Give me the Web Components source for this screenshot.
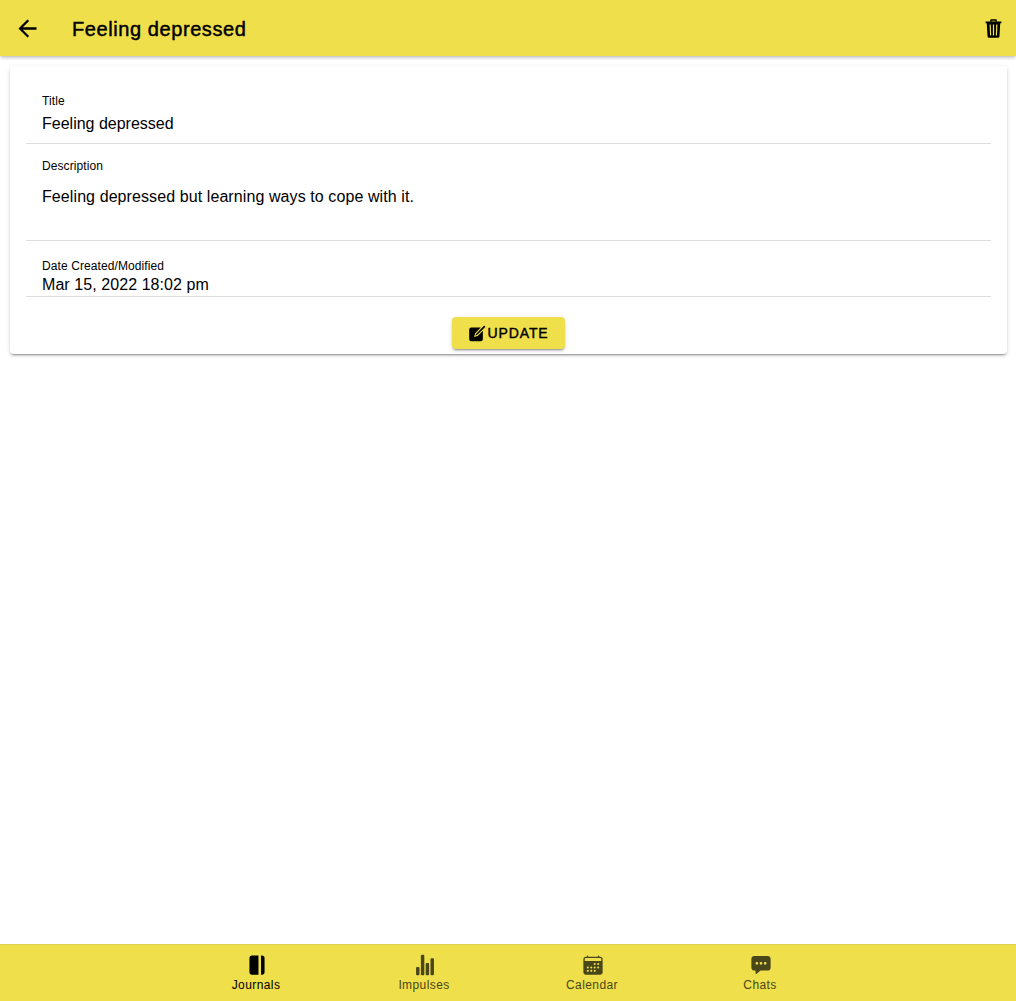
<!DOCTYPE html>
<html lang="en"><head><meta charset="utf-8"><title>Journal</title>
<style>html,body{margin:0;height:100%;background:#fff}body{font-family:"Liberation Sans",Arial,sans-serif;color:#000;overflow:hidden}</style></head>
<body><journal-page></journal-page>
<script>
const ICONS={
back:'<path d="M427 234.6H167l119.7-119.7L256 85.3 85.3 256 256 426.7l29.9-29.9L167 277.4h260z"/>',
trash:'<path fill-rule="evenodd" d="M176 86v-34q0-20 20-20h120q20 0 20 20v34h112v40h-28l-19 326q-2 28-28 28H139q-26 0-28-28L92 126H64V86zM208 86h96V64h-96zM160 160l12 264h28l-10-264zM240 160v264h32V160zM322 160l-10 264h28l12-264z"/>',
create:'<path d="M104 96H344L190 250 165 347 262 322 400 184V408a56 56 0 01-56 56H88a56 56 0 01-56-56V152a56 56 0 0156-56z"/><path d="M424 55a24 24 0 0134 34L241 297 200 312 215 271z"/>',
journal:'<path d="M290 32H144a64 64 0 00-64 64v320a64 64 0 0064 64h146zM368 32h-18v448h18a64 64 0 0064-64V96a64 64 0 00-64-64z"/>',
stats:'<path d="M104 496H72a24 24 0 01-24-24V328a24 24 0 0124-24h32a24 24 0 0124 24v144a24 24 0 01-24 24zM328 496h-32a24 24 0 01-24-24V232a24 24 0 0124-24h32a24 24 0 0124 24v240a24 24 0 01-24 24zM440 496h-32a24 24 0 01-24-24V120a24 24 0 0124-24h32a24 24 0 0124 24v352a24 24 0 01-24 24zM216 496h-32a24 24 0 01-24-24V40a24 24 0 0124-24h32a24 24 0 0124 24v432a24 24 0 01-24 24z"/>',
calendar:'<path fill-rule="evenodd" d="M112 64V48a16 16 0 0132 0v16h224V48a16 16 0 0132 0v16h16a64 64 0 0164 64v288a64 64 0 01-64 64H96a64 64 0 01-64-64V128a64 64 0 0164-64zM92 92a28 28 0 00-28 28v40h384v-40a28 28 0 00-28-28z"/><g fill="#efdf4b"><circle cx="296" cy="232" r="24"/><circle cx="376" cy="232" r="24"/><circle cx="136" cy="312" r="24"/><circle cx="216" cy="312" r="24"/><circle cx="296" cy="312" r="24"/><circle cx="376" cy="312" r="24"/><circle cx="136" cy="392" r="24"/><circle cx="216" cy="392" r="24"/><circle cx="296" cy="392" r="24"/></g>',
chat:'<path d="M408 48H104a72.08 72.08 0 00-72 72v192a72.08 72.08 0 0072 72h24v64a16 16 0 0026.25 12.29L245.74 384H408a72.08 72.08 0 0072-72V120a72.08 72.08 0 00-72-72zM160 248a32 32 0 1132-32 32 32 0 01-32 32zm96 0a32 32 0 1132-32 32 32 0 01-32 32zm96 0a32 32 0 1132-32 32 32 0 01-32 32z"/>'};
const define=(n,f)=>customElements.define(n,class extends HTMLElement{connectedCallback(){if(!this.shadowRoot)this.attachShadow({mode:'open'}).innerHTML=f(this)}});
define('app-icon',e=>`<style>:host{display:block;width:24px;height:24px;flex:none}svg{display:block;width:100%;height:100%;fill:currentColor}</style><svg viewBox="0 0 512 512">${ICONS[e.getAttribute('name')]}</svg>`);
define('app-toolbar',()=>`<style>:host{display:flex;align-items:center;height:56px;box-sizing:border-box;padding:0 12px 0 14px;background:#efdf4b;box-shadow:0 2px 4px -1px rgba(0,0,0,.2),0 1px 4px rgba(0,0,0,.16);position:relative}h1{flex:1;margin:2px 0 0 31px;font-size:20px;line-height:24px;font-weight:500;letter-spacing:.58px;-webkit-text-stroke:.45px #000}</style><slot name="start"></slot><h1><slot></slot></h1><slot name="end"></slot>`);
define('app-card',()=>`<style>:host{display:flow-root;box-sizing:border-box;height:288px;margin:10px 9px 0 10px;padding:16px;border-radius:4px;background:#fff;box-shadow:0 3px 1px -2px rgba(0,0,0,.2),0 2px 2px rgba(0,0,0,.14),0 1px 5px rgba(0,0,0,.12)}</style><slot></slot>`);
define('entry-field',e=>`<style>:host{display:block;box-sizing:border-box;padding:0 16px;border-bottom:1px solid #dedede}label{display:block;font-size:12px;line-height:14px;letter-spacing:var(--ls,.09px)}p{margin:var(--gap,6px) 0 0;font-size:16px;line-height:20px;letter-spacing:var(--ts,0)}</style><label>${e.getAttribute('label')}</label><p><slot></slot></p>`);
define('action-button',()=>`<style>:host{display:flex;justify-content:center;margin-top:20px}button{display:flex;align-items:center;justify-content:center;width:113px;height:32px;padding:0;border:0;border-radius:4px;background:#efdf4b;color:#000;font:500 14px/16px "Liberation Sans",Arial,sans-serif;letter-spacing:.9px;-webkit-text-stroke:.4px #000;box-shadow:0 3px 1px -2px rgba(0,0,0,.2),0 2px 2px rgba(0,0,0,.14),0 1px 5px rgba(0,0,0,.12)}app-icon{width:19px;height:19px;-webkit-text-stroke:0}</style><button><app-icon name="create"></app-icon><span><slot></slot></span></button>`);
define('tab-item',e=>`<style>:host{display:flex;flex-direction:column;align-items:center;width:168px;padding-top:9px;font-size:12px;line-height:14px;letter-spacing:.4px;color:#494719}:host([active]){color:#000}app-icon{width:22px;height:22px;margin:0 0 2px 2px}</style><app-icon name="${e.getAttribute('icon')}"></app-icon><span><slot></slot></span>`);
define('tab-bar',()=>`<style>:host{display:flex;justify-content:center;box-sizing:border-box;height:57px;background:#efdf4b;border-top:1px solid #ddcf52}</style><slot></slot>`);
define('journal-page',()=>`<style>:host{display:flex;flex-direction:column;height:100vh}main{flex:1}.t{height:62px;padding-top:12px}.d{height:97px;padding-top:15px;--gap:14px;--ts:.09px}.m{height:56px;padding-top:18px;--gap:2px;--ts:.07px}.back{width:27px;height:27px}.trash{width:21px;height:21px}</style>
<app-toolbar><app-icon slot="start" class="back" name="back"></app-icon>Feeling depressed<app-icon slot="end" class="trash" name="trash"></app-icon></app-toolbar>
<main><app-card><entry-field class="t" label="Title">Feeling depressed</entry-field><entry-field class="d" label="Description">Feeling depressed but learning ways to cope with it.</entry-field><entry-field class="m" label="Date Created/Modified">Mar 15, 2022 18:02 pm</entry-field><action-button>UPDATE</action-button></app-card></main>
<tab-bar><tab-item active icon="journal">Journals</tab-item><tab-item icon="stats">Impulses</tab-item><tab-item icon="calendar">Calendar</tab-item><tab-item icon="chat">Chats</tab-item></tab-bar>`);
</script></body></html>
